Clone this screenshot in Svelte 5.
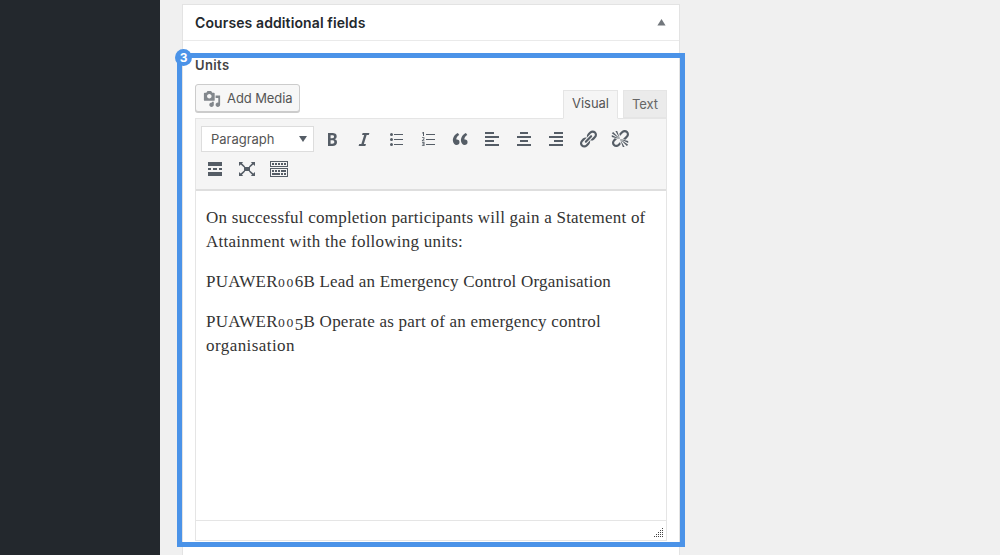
<script>
  const alignLeft = 'M12 5V3H3v2h9zm5 4V7H3v2h14zm-5 4v-2H3v2h9zm5 4v-2H3v2h14z';
  const alignCenter = 'M14 5V3H6v2h8zm3 4V7H3v2h14zm-3 4v-2H6v2h8zm3 4v-2H3v2h14z';
  const alignRight = 'M17 5V3H8v2h9zm0 4V7H3v2h14zm0 4v-2H8v2h9zm0 4v-2H3v2h14z';
  const row1 = [
    { name: 'Bold', d: 'M6 4v13h4.54c1.37 0 2.46-.33 3.26-1 .8-.66 1.2-1.58 1.2-2.77 0-.84-.17-1.51-.51-2.01s-.9-.85-1.67-1.03v-.09c.57-.1 1.02-.4 1.36-.9s.51-1.13.51-1.91c0-1.14-.39-1.98-1.17-2.5C12.75 4.26 11.5 4 9.78 4H6zm2.57 5.15V6.26h1.36c.73 0 1.27.11 1.61.32.34.22.51.58.51 1.07 0 .54-.16.92-.47 1.15s-.82.35-1.51.35h-1.5zm0 2.19h1.6c1.44 0 2.16.53 2.16 1.61 0 .6-.17 1.05-.51 1.34s-.86.43-1.57.43H8.57v-3.38z' },
    { name: 'Italic', d: 'M14.78 6h-2.13l-2.8 9h2.12l-.62 2H4.6l.62-2h2.14l2.8-9H8.03l.62-2h6.75z' },
    { name: 'Bulleted list', d: 'M5.5 4a1.5 1.5 0 1 1 0 3 1.5 1.5 0 0 1 0-3zm0 5a1.5 1.5 0 1 1 0 3 1.5 1.5 0 0 1 0-3zm0 5a1.5 1.5 0 1 1 0 3 1.5 1.5 0 0 1 0-3zM8 5h9v1H8zm0 5h9v1H8zm0 5h9v1H8z' },
    { name: 'Numbered list', d: 'M8 5h9v1H8zm0 5h9v1H8zm0 5h9v1H8zM5 3h1v4H5V4.3l-.8.4v-1zM4 8.2h2.4v2L5 11.4h1.5v.8H3.9v-.8l1.6-1.5V9H4zM4 13h2.5v4H3.9v-.8h1.7v-.8H4.4v-.8h1.2v-.8H4z' },
    { name: 'Blockquote', d: 'M9.49 13.22c0-.74-.2-1.38-.61-1.9-.62-.78-1.83-.88-2.53-.72-.29-1.65 1.11-3.75 2.92-4.65L7.88 4c-2.73 1.3-5.42 4.28-4.96 8.05C3.21 14.43 4.59 16 6.54 16c.85 0 1.56-.25 2.12-.75s.83-1.18.83-2.03zm8.05 0c0-.74-.2-1.38-.61-1.9-.63-.78-1.83-.88-2.53-.72-.29-1.65 1.11-3.75 2.92-4.65L15.93 4c-2.73 1.3-5.41 4.28-4.95 8.05.29 2.38 1.66 3.95 3.61 3.95.85 0 1.56-.25 2.12-.75s.83-1.18.83-2.03z' },
    { name: 'Align left', d: alignLeft },
    { name: 'Align center', d: alignCenter },
    { name: 'Align right', d: alignRight },
    { name: 'Insert link', d: 'M17.74 2.76c1.68 1.69 1.68 4.41 0 6.1l-1.53 1.52c-1.12 1.12-2.7 1.47-4.14 1.09l2.62-2.61.76-.77.76-.76c.84-.84.84-2.2 0-3.04-.84-.85-2.2-.85-3.04 0l-.77.76-3.38 3.38c-.37-1.44-.02-3.02 1.1-4.14l1.52-1.53c1.69-1.68 4.42-1.68 6.1 0zM8.59 13.43l5.34-5.34c.42-.42.42-1.1 0-1.52-.44-.43-1.13-.39-1.53 0l-5.33 5.34c-.42.42-.42 1.1 0 1.52.44.43 1.13.39 1.52 0zm-.76 2.29l4.14-4.15c.38 1.44.03 3.02-1.09 4.14l-1.52 1.53c-1.69 1.68-4.41 1.68-6.1 0-1.68-1.68-1.68-4.42 0-6.1l1.53-1.52c1.12-1.12 2.7-1.47 4.14-1.1l-4.14 4.15c-.85.84-.85 2.2 0 3.05.84.84 2.2.84 3.04 0z' },
    { name: 'Remove link', d: 'M17.74 2.26c1.68 1.69 1.68 4.41 0 6.1l-1.53 1.52c-.32.33-.69.58-1.08.77L13 10l1.69-1.64.76-.77.76-.76c.84-.84.84-2.2 0-3.04-.84-.85-2.2-.85-3.04 0l-.77.76-.76.76L10 7l-.65-2.14c.19-.38.44-.75.77-1.07l1.52-1.53c1.69-1.68 4.42-1.68 6.1 0zM1.8 4.2 3.2 3 10 10zM5.4 2h1.8L10 10zM1.8 6v1.9L10 10zm7.56 7.69L10 13l.74 2.35-1.38 1.39c-1.69 1.68-4.41 1.68-6.1 0-1.68-1.68-1.68-4.42 0-6.1l1.39-1.38L7 10l-.69.64-1.52 1.53c-.85.84-.85 2.2 0 3.04.84.85 2.2.85 3.04 0zM18.2 15.8 16.8 17 10 10zM14.6 18h-1.8L10 10zM18.2 14v-1.9L10 10z' }
  ];
  const row2 = [
    { name: 'Read more', d: 'M17 7V3H3v4h14zM6 11V9H3v2h3zm6 0V9H8v2h4zm5 0V9h-3v2h3zm0 6v-4H3v4h14z' },
    { name: 'Fullscreen', d: 'M7 8h6v4H7zM2 3h4.2L4.9 4.3l3.2 3.1-1 1-3.4-3L2 7zM18 3v4l-1.7-1.6-3.4 3-1-1 3.2-3.1L13.8 3zM2 17v-4l1.7 1.6 3.4-3 1 1-3.2 3.1L6.2 17zM18 17h-4.2l1.3-1.3-3.2-3.1 1-1 3.4 3L18 13z' },
    { name: 'Toolbar toggle', d: 'M19 2v6H1V2h18zm-1 5V3H2v4h16zM5 4v2H3V4h2zm3 0v2H6V4h2zm3 0v2H9V4h2zm3 0v2h-2V4h2zm3 0v2h-2V4h2zm2 5v9H1V9h18zm-1 8v-7H2v7h16zM5 11v2H3v-2h2zm3 0v2H6v-2h2zm3 0v2H9v-2h2zm6 0v2h-5v-2h5zm-6 3v2H3v-2h8zm3 0v2h-2v-2h2zm3 0v2h-2v-2h2z' }
  ];
  const grip = [[8, 0], [6, 2], [8, 2], [4, 4], [6, 4], [8, 4], [2, 6], [4, 6], [6, 6], [8, 6], [0, 8], [2, 8], [4, 8], [6, 8], [8, 8]];

  // Spreads each line's letters so that the line fills its measure.
  function measure(node, width) {
    const natural = node.getBoundingClientRect().width;
    node.style.letterSpacing = `${(width - natural) / node.textContent.length}px`;
  }
</script>

{#snippet icon(item)}
  <button class="tool" aria-label={item.name}>
    <svg viewBox="0 0 20 20" width="20" height="20"><path d={item.d} /></svg>
  </button>
{/snippet}

<div class="page">
  <aside></aside>
  <main>
    <section class="panel">
      <header>
        <h2><span use:measure={170.5}>Courses additional fields</span></h2>
        <svg width="9" height="7" viewBox="0 0 9 7"><path d="M4.5 0 8.6 6.5H.4z" /></svg>
      </header>
      <div class="inside">
        <div class="label"><span use:measure={34.5}>Units</span></div>
        <div class="bar">
          <button class="media">
            <svg viewBox="0 0 20 20" width="18" height="18"><path d="M13 11V4c0-.55-.45-1-1-1h-1.67L9 1H5L3.67 3H2c-.55 0-1 .45-1 1v7c0 .55.45 1 1 1h10c.55 0 1-.45 1-1zM7 4.5c1.38 0 2.5 1.12 2.5 2.5S8.38 9.5 7 9.5 4.5 8.38 4.5 7 5.62 4.5 7 4.5zM14 6h5v10.5c0 1.38-1.12 2.5-2.5 2.5S14 17.88 14 16.5s1.12-2.5 2.5-2.5c.17 0 .34.02.5.05V9h-3V6zm-4 8.05V13h2v3.5c0 1.38-1.12 2.5-2.5 2.5S7 17.88 7 16.5 8.12 14 9.5 14c.17 0 .34.02.5.05z" /></svg>
            <span use:measure={65.5}>Add Media</span>
          </button>
          <div class="tabs">
            <button class="tab active"><span use:measure={37}>Visual</span></button>
            <button class="tab"><span use:measure={26}>Text</span></button>
          </div>
        </div>
        <div class="editor">
          <div class="toolbar">
            <div class="tools">
              <button class="select">
                <span use:measure={63.5}>Paragraph</span>
                <svg width="8" height="6" viewBox="0 0 8 6"><path d="M0 0h8L4 6z" /></svg>
              </button>
              {#each row1 as item}{@render icon(item)}{/each}
            </div>
            <div class="tools second">
              {#each row2 as item}{@render icon(item)}{/each}
            </div>
          </div>
          <div class="content">
            <p>
              <span use:measure={439.5}>On successful completion participants will gain a Statement of</span><br />
              <span use:measure={257}>Attainment with the following units:</span>
            </p>
            <p><span use:measure={405.5}>PUAWER<span class="low">00</span>6B Lead an Emergency Control Organisation</span></p>
            <p>
              <span use:measure={395.5}>PUAWER<span class="low">00</span><span class="drop">5</span>B Operate as part of an emergency control</span><br />
              <span use:measure={89}>organisation</span>
            </p>
          </div>
          <footer>
            <svg width="9" height="9" viewBox="0 0 9 9">
              {#each grip as [x, y]}<rect {x} {y} width="1" height="1" />{/each}
            </svg>
          </footer>
        </div>
      </div>
    </section>
    <div class="highlight"><b>3</b></div>
  </main>
</div>

<style>
  :global(body) { margin: 0; }
  .page {
    display: flex;
    height: 555px;
    overflow: hidden;
    background: #f0f0f0;
    font: 13px/18px Inter, "Open Sans", sans-serif;
    color: #444;
  }
  .page * { box-sizing: border-box; }
  span { white-space: nowrap; }
  button { font: inherit; color: inherit; margin: 0; padding: 0; border: 0; background: none; }
  svg { display: block; flex: none; }
  aside { width: 160px; background: #23282d; }
  main { position: relative; flex: 1; padding: 4px 0 0 22px; }
  .panel {
    width: 498px;
    height: 570px;
    border: 1px solid #e3e3e3;
    background: #fff;
  }
  header {
    display: flex;
    align-items: center;
    justify-content: space-between;
    height: 36px;
    padding: 0 13px 0 12px;
    border-bottom: 1px solid #eaeaea;
  }
  h2 { margin: 0; font-size: 14px; font-weight: 600; color: #23282d; }
  header svg { fill: #72777c; }
  .inside { padding: 15px 12px 0; }
  .label { height: 18px; font-weight: 600; }
  .bar { display: flex; justify-content: space-between; height: 44px; padding-top: 10px; }
  .media {
    display: flex;
    align-items: center;
    gap: 6px;
    width: 105px;
    height: 28px;
    padding-left: 7px;
    border: 1px solid #ccc;
    border-radius: 3px;
    background: #f7f7f7;
    box-shadow: 0 1px 0 #ccc;
    color: #555;
  }
  .media svg { fill: #82878c; position: relative; top: 1px; }
  .tabs { display: flex; gap: 5px; padding-top: 6px; }
  .tab {
    height: 28px;
    width: 44px;
    padding-bottom: 1px;
    border: 1px solid #e5e5e5;
    background: #ebebeb;
    color: #666;
  }
  .tab.active {
    z-index: 1;
    width: 55px;
    height: 29px;
    padding-bottom: 3px;
    border-bottom-color: #f5f5f5;
    background: #f5f5f5;
    color: #555;
  }
  .editor { width: 472px; height: 423px; border: 1px solid #e5e5e5; display: flex; flex-direction: column; }
  .toolbar {
    height: 72px;
    padding: 7px 5px 0;
    background: #f5f5f5;
    border-bottom: 2px solid #dedede;
  }
  .tools { display: flex; align-items: center; gap: 12px; height: 26px; }
  .tools .tool:nth-child(2) { margin-left: -4px; }
  .tool { width: 20px; height: 20px; }
  .tool svg { fill: #555d66; }
  .second { height: 20px; margin-top: 7px; padding-left: 4px; }
  .tools.second .tool:nth-child(2) { margin-left: 0; }
  .select {
    display: flex;
    align-items: center;
    justify-content: space-between;
    width: 113px;
    height: 26px;
    padding: 0 6px 0 9px;
    border: 1px solid #ddd;
    background: #fff;
    color: #555;
  }
  .select svg { fill: #555d66; }
  .content {
    flex: 1;
    padding: 15px 10px 0;
    font: 17px/24px "Liberation Serif", serif;
    color: #333;
  }
  p { margin: 0 0 16px; }
  .low { font: 11.5px/1 "DejaVu Serif", serif; letter-spacing: 1.2px; }
  .drop { position: relative; top: 3px; }
  footer { display: flex; justify-content: flex-end; height: 20px; padding: 7px 3px 0; border-top: 1px solid #e5e5e5; }
  footer svg { fill: #444; }
  .highlight {
    position: absolute;
    left: 17px;
    top: 53px;
    width: 508px;
    height: 494px;
    border: 5px solid #4b93e8;
  }
  .highlight b {
    position: absolute;
    left: -7px;
    top: -9px;
    width: 17px;
    height: 17px;
    border-radius: 50%;
    background: #4b93e8;
    color: #fff;
    font: 700 12px/17px Inter, sans-serif;
    text-align: center;
  }
</style>
